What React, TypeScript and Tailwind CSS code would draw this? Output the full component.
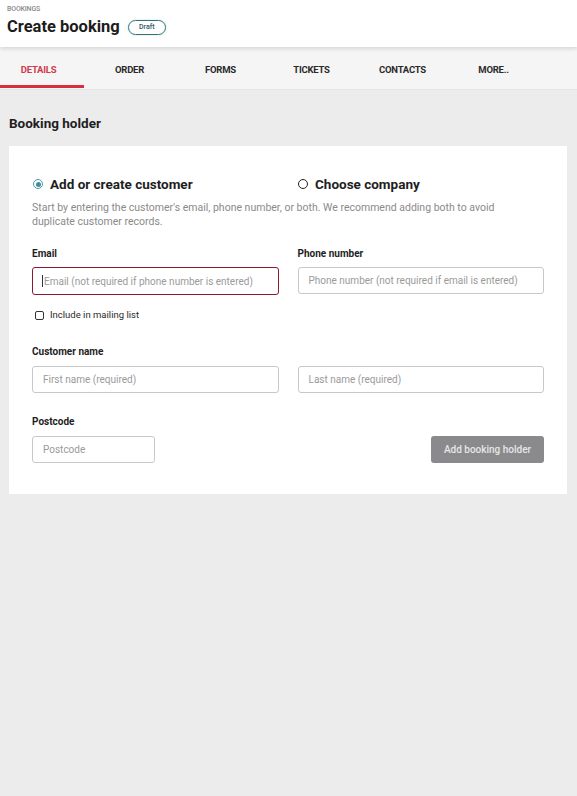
import React from "react";

const tabs = ["DETAILS", "ORDER", "FORMS", "TICKETS", "CONTACTS", "MORE.."];

export default function App() {
  return (
    <div className="w-[577px] h-[796px] bg-[#ececed] overflow-hidden" style={{ fontFamily: "Roboto, 'Liberation Sans', sans-serif" }}>
      {/* Header */}
      <div className="relative z-10 h-[47px] bg-white pl-[7px] pt-[4px] shadow-[0_2px_4px_rgba(0,0,0,0.12)]">
        <div className="text-[7px] leading-[10px] font-medium text-[#8a8a8a] tracking-tight">BOOKINGS</div>
        <div className="flex items-center mt-[1px]">
          <span className="text-[16.5px] leading-[24px] font-bold text-[#1c1c1c]">Create booking</span>
          <span className="ml-[8px] flex h-[15px] w-[38px] items-center justify-center rounded-full border border-[#3b6e78] text-[7px] font-medium text-[#2c5a66] shadow-[0_0_2px_rgba(80,200,210,0.5)]">Draft</span>
        </div>
      </div>
      {/* Tabs */}
      <div className="h-[43px] bg-[#f5f5f6] border-b border-[#e4e4e6] overflow-hidden">
        <div className="flex h-full -ml-[7px]">
          {tabs.map((t, i) => (
            <div key={t} className="relative flex w-[91px] shrink-0 items-center justify-center pt-[4px]">
              <span className={`text-[9.5px] font-bold tracking-tight ${i === 0 ? "text-[#d03a4a]" : "text-[#2a2a2a]"}`}>{t}</span>
              {i === 0 && <div className="absolute bottom-[1px] left-[7px] right-0 h-[3px] bg-[#d6303f]" />}
            </div>
          ))}
        </div>
      </div>
      {/* Content */}
      <div className="px-[9px] pt-[24px]">
        <div className="text-[13.5px] leading-[18px] font-bold text-[#1e1e1e]">Booking holder</div>
        <div className="mt-[14px] w-[558px] bg-white px-[23px] pt-[28px] pb-[31px]">
          <div className="flex">
            <label className="flex w-[265px] items-center">
              <span className="ml-[1px] flex h-[10px] w-[10px] items-center justify-center rounded-full border border-[#4f9aa6]">
                <span className="h-[5px] w-[5px] rounded-full bg-[#3f8f9c]" />
              </span>
              <span className="ml-[7px] text-[13.5px] font-bold text-[#1e1e1e]">Add or create customer</span>
            </label>
            <label className="flex items-center">
              <span className="ml-[1px] h-[10px] w-[10px] rounded-full border-[1.5px] border-[#222]" />
              <span className="ml-[7px] text-[13.5px] font-bold text-[#1e1e1e]">Choose company</span>
            </label>
          </div>
          <p className="mt-[7px] max-w-[480px] text-[10.5px] leading-[14px] text-[#8a8a8a]">
            Start by entering the customer's email, phone number, or both. We recommend adding both to avoid duplicate customer records.
          </p>
          <div className="mt-[18px] grid grid-cols-2 gap-x-[19px]">
            <div>
              <div className="text-[10px] font-bold leading-[14px] text-[#1e1e1e]">Email</div>
              <div className="mt-[6px] flex h-[28px] items-center rounded-[3px] border-[1.5px] border-[#8a1a2e] px-[9px] text-[10px] text-[#9a9a9a]">
                <span className="mr-[1px] h-[12px] w-px bg-[#333]" />Email (not required if phone number is entered)
              </div>
              <label className="mt-[13px] flex items-center">
                <span className="ml-[3px] h-[9px] w-[9px] rounded-[2px] border-[1.5px] border-[#333]" />
                <span className="ml-[6px] text-[9.5px] text-[#2a2a2a]">Include in mailing list</span>
              </label>
            </div>
            <div>
              <div className="text-[10px] font-bold leading-[14px] text-[#1e1e1e]">Phone number</div>
              <div className="mt-[6px] flex h-[27px] items-center rounded-[3px] border border-[#c8c8ca] px-[10px] text-[10px] text-[#9a9a9a]">
                Phone number (not required if email is entered)
              </div>
            </div>
          </div>
          <div className="mt-[22px] text-[10px] font-bold leading-[14px] text-[#1e1e1e]">Customer name</div>
          <div className="mt-[7px] grid grid-cols-2 gap-x-[19px]">
            <div className="flex h-[27px] items-center rounded-[3px] border border-[#c8c8ca] px-[10px] text-[10px] text-[#9a9a9a]">First name (required)</div>
            <div className="flex h-[27px] items-center rounded-[3px] border border-[#c8c8ca] px-[10px] text-[10px] text-[#9a9a9a]">Last name (required)</div>
          </div>
          <div className="mt-[22px] text-[10px] font-bold leading-[14px] text-[#1e1e1e]">Postcode</div>
          <div className="mt-[7px] flex items-center justify-between">
            <div className="flex h-[27px] w-[123px] items-center rounded-[3px] border border-[#c8c8ca] px-[10px] text-[10px] text-[#9a9a9a]">Postcode</div>
            <div className="flex h-[27px] w-[113px] items-center justify-center rounded-[3px] bg-[#8a8a8c] text-[10px] font-medium text-[#e6e6e6]">Add booking holder</div>
          </div>
        </div>
      </div>
    </div>
  );
}
